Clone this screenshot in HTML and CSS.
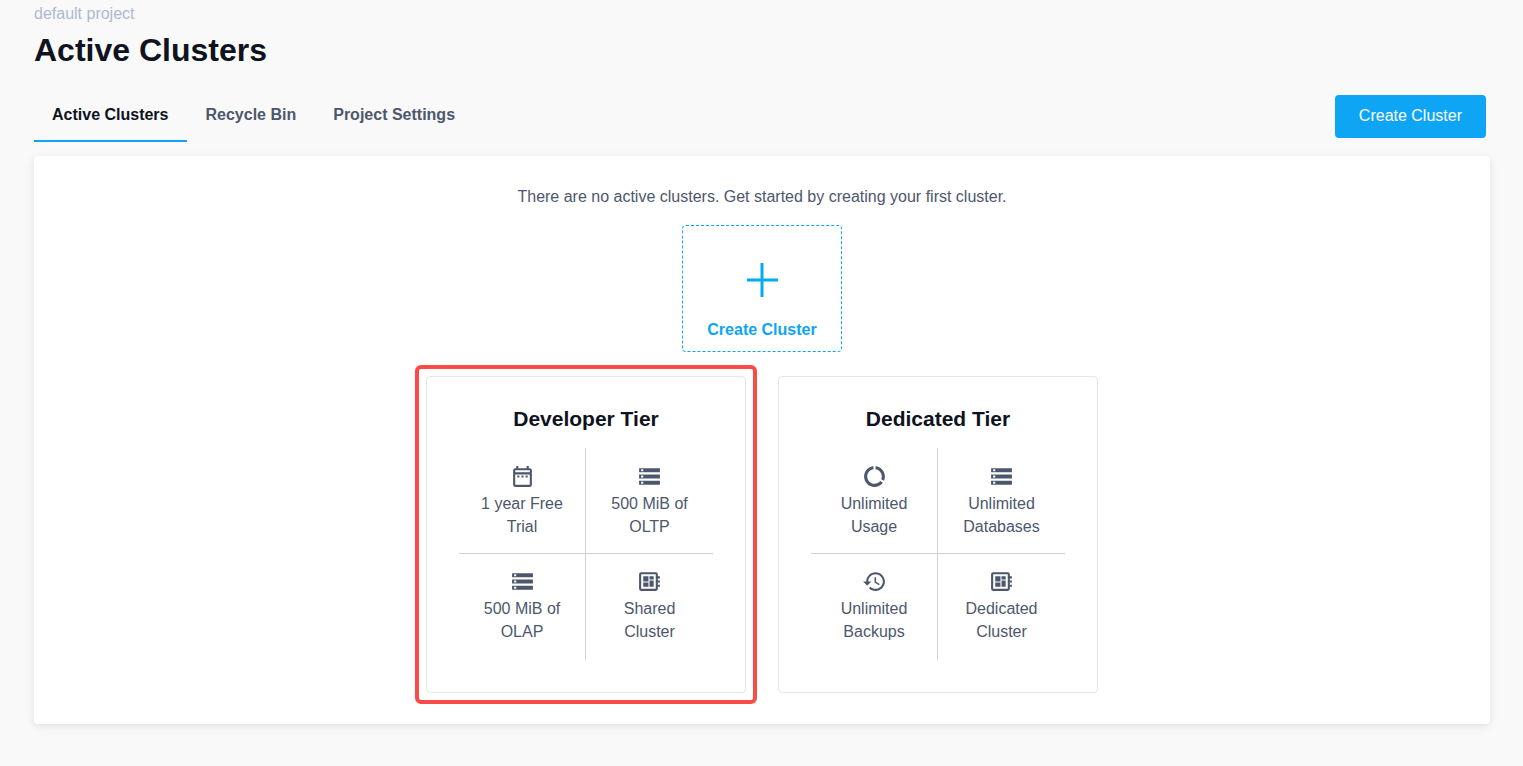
FILE: index.html
```html
<!DOCTYPE html>
<html lang="en">
<head>
<meta charset="utf-8">
<title>Active Clusters</title>
<link rel="stylesheet" href="styles.css">
</head>
<body>
<svg class="sprite" aria-hidden="true">
  <symbol id="calendar" viewBox="0 0 24 24"><path d="M7 11h2v2H7v-2zm14-5v14c0 1.1-.9 2-2 2H5c-1.110 0-2-.9-2-2l.010-14c0-1.100.880-2 1.990-2h1V2h2v2h8V2h2v2h1c1.100 0 2 .9 2 2zM5 8h14V6H5v2zm14 12V10H5v10h14zm-4-7h2v-2h-2v2zm-4 0h2v-2h-2v2z"/></symbol>
  <symbol id="storage" viewBox="0 0 24 24"><path d="M2 20h20v-4H2v4zm2-3h2v2H4v-2zM2 4v4h20V4H2zm4 3H4V5h2v2zm-4 7h20v-4H2v4zm2-3h2v2H4v-2z"/></symbol>
  <symbol id="board" viewBox="0 0 24 24"><path d="M22 9V7h-2V5c0-1.100-.9-2-2-2H4c-1.100 0-2 .9-2 2v14c0 1.100.9 2 2 2h14c1.100 0 2-.9 2-2v-2h2v-2h-2v-2h2v-2h-2V9h2zm-4 10H4V5h14v14zM6 13h5v4H6v-4zm6-6h4v3h-4V7zM6 7h5v5H6V7zm6 4h4v6h-4v-6z"/></symbol>
  <symbol id="usage" viewBox="0 0 24 24"><path d="M13 2.050v3.030c3.390.490 6 3.390 6 6.920 0 .9-.180 1.750-.480 2.540l2.600 1.530c.560-1.240.880-2.620.880-4.070 0-5.180-3.950-9.450-9-9.950zM12 19c-3.870 0-7-3.130-7-7 0-3.530 2.610-6.430 6-6.920V2.050c-5.060.5-9 4.760-9 9.950 0 5.520 4.470 10 9.990 10 3.310 0 6.240-1.610 8.060-4.090l-2.600-1.530C16.170 17.980 14.210 19 12 19z"/></symbol>
  <symbol id="history" viewBox="0 0 24 24"><path d="M13 3c-4.970 0-9 4.030-9 9H1l3.890 3.890.070.140L9 12H6c0-3.870 3.130-7 7-7s7 3.130 7 7-3.130 7-7 7c-1.930 0-3.680-.790-4.940-2.060l-1.420 1.420C8.270 19.990 10.510 21 13 21c4.970 0 9-4.030 9-9s-4.030-9-9-9zm-1 5v5l4.280 2.540.720-1.210-3.500-2.080V8H12z"/></symbol>
</svg>
<div class="page">
  <header class="heading">
    <p class="project">default project</p>
    <h1 class="title">Active Clusters</h1>
  </header>
  <div class="toolbar">
    <nav class="tabs">
      <a class="tab tab-active" href="#active" aria-current="page">Active Clusters</a>
      <a class="tab" href="#recycle">Recycle Bin</a>
      <a class="tab" href="#settings">Project Settings</a>
    </nav>
    <button class="primary" type="button">Create Cluster</button>
  </div>
  <main class="panel">
    <p class="message">There are no active clusters. Get started by creating your first cluster.</p>
    <button class="create-tile" type="button">
      <svg class="plus" viewBox="0 0 32 34" aria-hidden="true"><path d="M16 0v34M1 17h31"/></svg>
      <span>Create Cluster</span>
    </button>
    <div class="tiers">
      <section class="tier tier-highlight">
        <h2 class="tier-title">Developer Tier</h2>
        <ul class="features">
          <li class="feature"><svg class="icon"><use href="#calendar"/></svg><span>1 year Free Trial</span></li>
          <li class="feature"><svg class="icon"><use href="#storage"/></svg><span>500 MiB of OLTP</span></li>
          <li class="feature"><svg class="icon"><use href="#storage"/></svg><span>500 MiB of OLAP</span></li>
          <li class="feature"><svg class="icon"><use href="#board"/></svg><span>Shared Cluster</span></li>
        </ul>
      </section>
      <section class="tier">
        <h2 class="tier-title">Dedicated Tier</h2>
        <ul class="features">
          <li class="feature"><svg class="icon"><use href="#usage"/></svg><span>Unlimited Usage</span></li>
          <li class="feature"><svg class="icon"><use href="#storage"/></svg><span>Unlimited Databases</span></li>
          <li class="feature"><svg class="icon"><use href="#history"/></svg><span>Unlimited Backups</span></li>
          <li class="feature"><svg class="icon"><use href="#board"/></svg><span>Dedicated Cluster</span></li>
        </ul>
      </section>
    </div>
  </main>
</div>
</body>
</html>
```
FILE: styles.css
```css
* { box-sizing: border-box; }

body {
  margin: 0;
  background: #f9f9f9;
  color: #4c576c;
  font: 16px/23px "Liberation Sans", Arial, sans-serif;
}

h1, h2, p, ul { margin: 0; padding: 0; }
button { font: inherit; cursor: pointer; }

.sprite { display: none; }

.page { padding: 2px 33px 40px 34px; }

.project { color: #adb9d0; }

.title {
  color: #0e131d;
  font-size: 32px;
  line-height: 50px;
}

.toolbar {
  display: flex;
  justify-content: space-between;
  align-items: flex-end;
  padding: 20px 4px 0 0;
}

.tabs {
  display: flex;
  gap: 1px;
}

.tab {
  padding: 8px 18px 14px;
  border-bottom: 2px solid transparent;
  color: #4c576c;
  font-weight: bold;
  text-decoration: none;
}

.tab-active {
  border-color: #0ea5f4;
  color: #0e131d;
}

.primary {
  margin-bottom: 4px;
  padding: 9px 24px 11px;
  border: 0;
  border-radius: 4px;
  background: #0ea5f4;
  color: #fff;
}

.panel {
  display: flex;
  flex-direction: column;
  align-items: center;
  margin-top: 14px;
  padding: 29px 32px 31px;
  border-radius: 4px;
  background: #fff;
  box-shadow: 0 2px 8px rgba(0, 0, 0, 0.1);
}

.create-tile {
  display: flex;
  flex-direction: column;
  align-items: center;
  gap: 21px;
  width: 160px;
  margin: 17px 0 24px;
  padding: 37px 16px 10px;
  border: 1px dashed #0ea5f4;
  border-radius: 4px;
  background: none;
  color: #0ea5f4;
  font-weight: bold;
}

.plus {
  width: 32px;
  height: 34px;
  fill: none;
  stroke: #00adf0;
  stroke-width: 3;
}

.tiers {
  display: flex;
  flex-wrap: wrap;
  justify-content: center;
  gap: 32px;
}

.tier {
  position: relative;
  width: 320px;
  padding: 30px 32px 32px;
  border: 1px solid #e6e6e6;
  border-radius: 4px;
}

.tier-highlight::after {
  content: "";
  position: absolute;
  inset: -12px;
  border: 4px solid #f94b47;
  border-radius: 6px;
  pointer-events: none;
}

.tier-title {
  margin-bottom: 18px;
  color: #0e131d;
  font-size: 21px;
  line-height: 23px;
  text-align: center;
}

.features {
  display: grid;
  grid-template-columns: 1fr 1fr;
  list-style: none;
}

.feature {
  display: flex;
  flex-direction: column;
  align-items: center;
  gap: 3px;
  padding: 16px 16px 15px;
  text-align: center;
}

.feature:nth-child(odd) { border-right: 1px solid #d0d0d0; }

.feature:nth-child(n + 3) {
  padding: 15px 16px 17px;
  border-top: 1px solid #d0d0d0;
}

.icon {
  width: 25px;
  height: 25px;
  fill: #4c576c;
}
```
